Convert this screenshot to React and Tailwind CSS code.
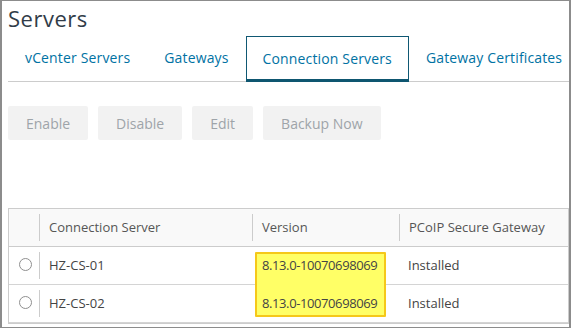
const tabs = ['vCenter Servers', 'Gateways', 'Connection Servers', 'Gateway Certificates'];
const actions = ['Enable', 'Disable', 'Edit', 'Backup Now'];
const servers = [
  { name: 'HZ-CS-01', version: '8.13.0-10070698069', pcoip: 'Installed' },
  { name: 'HZ-CS-02', version: '8.13.0-10070698069', pcoip: 'Installed' },
];

const font = { fontFamily: '"Open Sans", "Liberation Sans", sans-serif' };

export default function App() {
  return (
    <div
      className="w-[571px] h-[328px] overflow-hidden bg-white border-[#8c8c8c] border-t border-b border-l-2 border-r-2 pl-[6px]"
      style={font}
    >
      {/* Title */}
      <h1 className="text-[22px] leading-none text-[#313c48] pt-[6px] h-[35px] tracking-[0.5px]">Servers</h1>

      {/* Tabs */}
      <div className="flex border-b border-[#cccccc] h-[46px] whitespace-nowrap">
        {tabs.map((tab, i) =>
          i === 2 ? (
            <div
              key={tab}
              className="relative shrink-0 flex items-center px-[16px] border border-[#0f5873] border-b-0 text-[14px] tracking-[0.15px] text-[#0072a3] h-[46px] mb-[-1px]"
            >
              <span className="-mt-[2px]">{tab}</span>
              <div className="absolute left-[-1px] right-[-1px] bottom-0 h-[3px] bg-[#0e5670]" />
            </div>
          ) : (
            <div key={tab} className="shrink-0 flex items-center px-[17px] text-[14px] tracking-[0.15px] text-[#0072a3]">
              <span className="-mt-[2px]">{tab}</span>
            </div>
          )
        )}
      </div>

      {/* Action buttons */}
      <div className="flex gap-[10px] mt-[24px]">
        {actions.map((a) => (
          <div
            key={a}
            className="h-[34px] px-[18px] flex items-center rounded-[2px] bg-[#f2f2f2] text-[14px] text-[#9ea4a9] whitespace-nowrap"
          >
            {a}
          </div>
        ))}
      </div>

      {/* Table */}
      <div className="relative mt-[68px] border border-[#cccccc] text-[13px]">
        <div className="flex h-[38px] bg-[#f9f9f9] border-b border-[#cccccc] text-[#565656]">
          <div className="w-[30px]" />
          <div className="w-[213px] flex items-center pl-[9px] border-l border-[#cccccc] my-[5px]">Connection Server</div>
          <div className="w-[147px] flex items-center pl-[9px] border-l border-[#cccccc] my-[5px]">Version</div>
          <div className="flex-1 flex items-center pl-[9px] border-l border-[#cccccc] my-[5px]">PCoIP Secure Gateway</div>
        </div>
        {servers.map((s) => (
          <div key={s.name} className="flex h-[38px] border-b border-[#d4d4d4] text-[#444444]">
            <div className="w-[30px] flex items-center pl-[10px]">
              <span className="block w-[13px] h-[13px] rounded-full border border-[#8f8f8f] -mt-[3px]" />
            </div>
            <div className="w-[213px] flex items-center pl-[9px] border-l border-[#cccccc] my-[5px]">{s.name}</div>
            <div className="relative z-10 w-[147px] flex items-center pl-[10px] tracking-[-0.4px]">{s.version}</div>
            <div className="flex-1 flex items-center pl-[9px]">{s.pcoip}</div>
          </div>
        ))}
        {/* highlight annotation */}
        <div className="absolute left-[246px] top-[43px] w-[131px] h-[65px] bg-[#ffff66] border-2 border-[#f5c81a] rounded-[1px]" />
      </div>
    </div>
  );
}
